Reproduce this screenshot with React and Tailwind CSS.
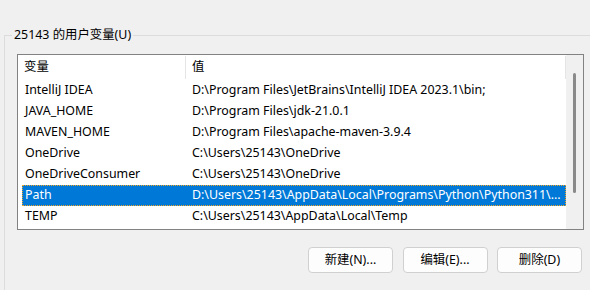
import React from 'react'

const rows = [
  ['IntelliJ IDEA', 'D:\\Program Files\\JetBrains\\IntelliJ IDEA 2023.1\\bin;'],
  ['JAVA_HOME', 'D:\\Program Files\\jdk-21.0.1'],
  ['MAVEN_HOME', 'D:\\Program Files\\apache-maven-3.9.4'],
  ['OneDrive', 'C:\\Users\\25143\\OneDrive'],
  ['OneDriveConsumer', 'C:\\Users\\25143\\OneDrive'],
  ['Path', 'D:\\Users\\25143\\AppData\\Local\\Programs\\Python\\Python311\\...'],
  ['TEMP', 'C:\\Users\\25143\\AppData\\Local\\Temp'],
]

function Btn({children}){
  return <button className="w-[85px] h-[26px] bg-[#fdfdfd] border border-[#d0d0d0] rounded-[4px] text-[12.4px] text-black flex items-center justify-center">{children}</button>
}

export default function App(){
  const selected = 5
  return <div className="w-[590px] h-[290px] bg-[#f0f0f0] overflow-hidden text-[12.4px] text-black" style={{fontFamily:'"Segoe UI","Noto Sans","Noto Sans CJK SC",sans-serif'}}>
    <div className="relative mt-[35px] ml-[4px] w-[600px] h-[300px] border border-[#dcdcdc]">
      <div className="absolute -top-[9px] left-[7px] px-[2px] bg-[#f0f0f0] leading-[16px]">25143 的用户变量(U)</div>

      <div className="mt-[18px] ml-[12px] w-[567px] h-[176px] border border-[#828282] bg-white flex">
        <div className="flex-1 flex flex-col">
          <div className="h-[25px] flex items-stretch">
            <div className="w-[168px] pl-[6px] flex items-center border-r border-[#e5e5e5] my-[1px]">变量</div>
            <div className="flex-1 pl-[6px] flex items-center border-r border-[#e5e5e5] my-[1px]">值</div>
          </div>
          <div className="flex flex-col pl-[4px]">
            {rows.map((r,i)=>(
              <div key={r[0]} className={'h-[21px] flex items-center ' + (i===selected ? 'bg-[#0078d7] text-white outline outline-1 outline-dotted outline-[#f5a623] -outline-offset-1' : '')}>
                <div className="w-[170px] pl-[3px] whitespace-nowrap">{r[0]}</div>
                <div className="flex-1 whitespace-nowrap overflow-hidden">{r[1]}</div>
              </div>
            ))}
          </div>
        </div>
        <div className="w-[17px] bg-[#f0f0f0] flex justify-center pt-[18px]">
          <div className="w-[3px] h-[120px] bg-[#8a8a8a] rounded-full"></div>
        </div>
      </div>

      <div className="flex gap-[9.5px] mt-[17px] ml-[303px]">
        <Btn>新建(N)...</Btn>
        <Btn>编辑(E)...</Btn>
        <Btn>删除(D)</Btn>
      </div>
    </div>
  </div>
}
